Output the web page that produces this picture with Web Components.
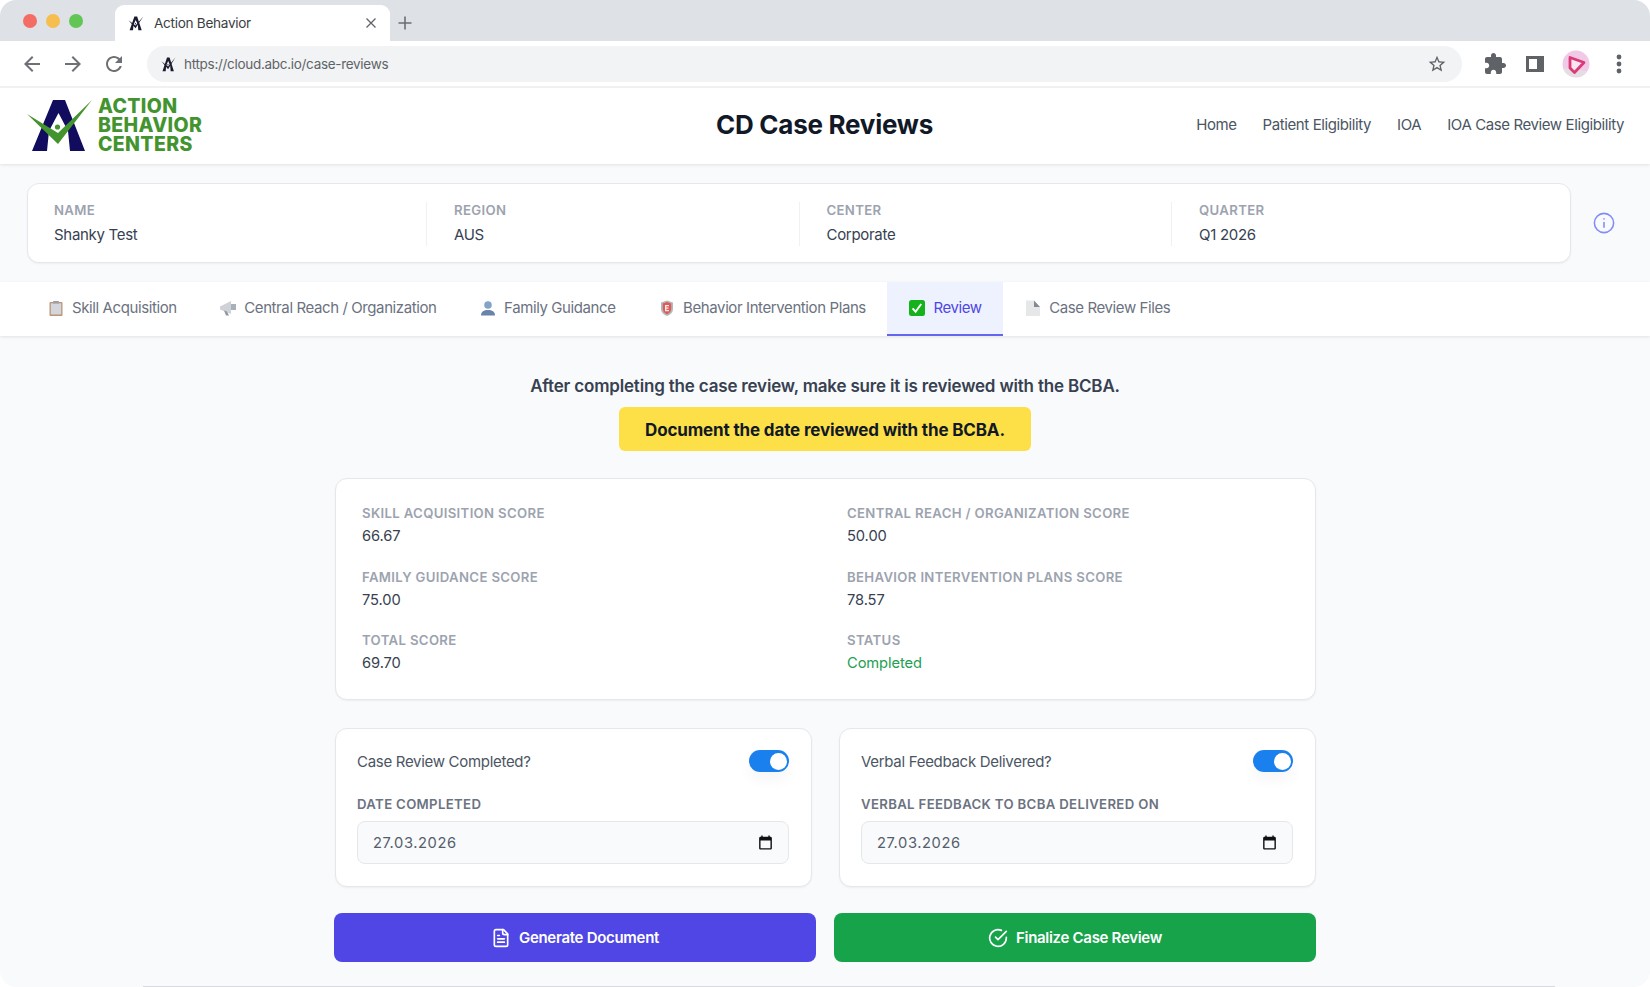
<!DOCTYPE html>
<html lang="en">
<head>
<meta charset="utf-8">
<title>CD Case Reviews</title>
<style>
  html, body { margin: 0; height: 987px; overflow: hidden; background: #fff; }
  body { font-family: Inter, "Liberation Sans", sans-serif; color: #374151; }
  .page { background: #f9fafb; height: 899px; overflow: hidden; border-radius: 0 0 16px 16px; }
  .page-edge { height: 1px; margin: 24px 95px 0 143px; background: #d8dadd; }
</style>
</head>
<body>
<browser-bar title-text="Action Behavior" url="https://cloud.abc.io/case-reviews"></browser-bar>
<div class="page">
  <app-header heading="CD Case Reviews">
    <a>Home</a><a>Patient Eligibility</a><a>IOA</a><a>IOA Case Review Eligibility</a>
  </app-header>
  <info-strip>
    <info-field label="Name">Shanky Test</info-field>
    <info-field label="Region">AUS</info-field>
    <info-field label="Center">Corporate</info-field>
    <info-field label="Quarter">Q1 2026</info-field>
  </info-strip>
  <tab-bar>
    <tab-item icon="clipboard">Skill Acquisition</tab-item>
    <tab-item icon="megaphone">Central Reach / Organization</tab-item>
    <tab-item icon="bust">Family Guidance</tab-item>
    <tab-item icon="shield">Behavior Intervention Plans</tab-item>
    <tab-item icon="check" active>Review</tab-item>
    <tab-item icon="page">Case Review Files</tab-item>
  </tab-bar>
  <review-panel>
    <review-notice slot="notice" note="After completing the case review, make sure it is reviewed with the BCBA.">Document the date reviewed with the BCBA.</review-notice>
    <score-card slot="scores">
      <score-item label="Skill Acquisition Score">66.67</score-item>
      <score-item label="Central Reach / Organization Score">50.00</score-item>
      <score-item label="Family Guidance Score">75.00</score-item>
      <score-item label="Behavior Intervention Plans Score">78.57</score-item>
      <score-item label="Total Score">69.70</score-item>
      <score-item label="Status" tone="good">Completed</score-item>
    </score-card>
    <toggle-card slot="toggles" question="Case Review Completed?" label="Date Completed" date="27.03.2026"></toggle-card>
    <toggle-card slot="toggles" question="Verbal Feedback Delivered?" label="Verbal Feedback to BCBA Delivered On" date="27.03.2026"></toggle-card>
    <action-button slot="actions" icon="doc" tone="indigo">Generate Document</action-button>
    <action-button slot="actions" icon="circle" tone="green">Finalize Case Review</action-button>
  </review-panel>
  <div class="page-edge"></div>
</div>

<script>
const html = String.raw;

const logoMark = (navy, green) => html`
  <polygon fill="${navy}" points="28,2 40,2 60,53 45,53 43,33 33.500,15 24,33 22,53 7,53"/>
  <polygon fill="${green}" points="2,16 33,35 67,2 33,46"/>
  <circle fill="${green}" cx="32.5" cy="29" r="2.6"/>`;

class BrowserBar extends HTMLElement {
  constructor() {
    super();
    const root = this.attachShadow({ mode: 'open' });
    root.innerHTML = html`
      <style>
        :host { display: block; font-family: Inter, "Liberation Sans", sans-serif; }
        svg { display: block; }
        .strip { height: 41px; background: #dee1e6; border-radius: 16px 16px 0 0; display: flex; align-items: flex-end; }
        .lights { display: flex; gap: 9px; padding: 0 0 13px 23px; width: 115px; box-sizing: border-box; }
        .lights i { width: 14px; height: 14px; border-radius: 50%; }
        .tab { width: 275px; height: 36px; background: #fff; border-radius: 9px 9px 0 0; display: flex; align-items: center; padding: 0 12px 0 13px; box-sizing: border-box; font-size: 13.6px; letter-spacing: -.3px; color: #3c4043; }
        .tab span { flex: 1; margin-left: 10px; }
        .plus { margin: 0 0 10px 7px; }
        .tools { height: 47px; box-sizing: border-box; padding-top: 5px; display: flex; align-items: flex-start; background: #fff; border-bottom: 2px solid #f1f1f2; }
        .nav { width: 147px; display: flex; gap: 17px; padding: 6px 0 0 20px; box-sizing: border-box; }
        .pill { width: 1315px; height: 36px; border-radius: 18px; background: #f1f3f4; display: flex; align-items: center; padding: 0 15px 0 14px; box-sizing: border-box; font-size: 13.5px; letter-spacing: -.3px; color: #5f6368; }
        .pill span { flex: 1; margin-left: 8px; }
        .right { display: flex; align-items: center; height: 36px; margin-left: 21px; }
      </style>
      <div class="strip">
        <div class="lights"><i style="background:#f46d64"></i><i style="background:#f6bd4f"></i><i style="background:#62c654"></i></div>
        <div class="tab">
          <svg width="16" height="15" viewBox="0 0 70 56" preserveAspectRatio="none">${logoMark('#1b1b2e', '#1b1b2e')}</svg>
          <span>${this.getAttribute('title-text')}</span>
          <svg width="14" height="14" viewBox="0 0 14 14"><path d="M2.5 2.5l9 9M11.5 2.5l-9 9" stroke="#5f6368" stroke-width="1.3" fill="none"/></svg>
        </div>
        <svg class="plus" width="16" height="16" viewBox="0 0 16 16"><path d="M8 1.5v13M1.5 8h13" stroke="#6b6f74" stroke-width="1.6" fill="none"/></svg>
      </div>
      <div class="tools">
        <div class="nav">
          <svg width="24" height="24" viewBox="0 0 24 24" fill="#6d7075"><path d="M20 11H7.83l5.59-5.59L12 4l-8 8 8 8 1.41-1.41L7.83 13H20v-2z"/></svg>
          <svg width="24" height="24" viewBox="0 0 24 24" fill="#6d7075"><path d="M4 11h12.17l-5.59-5.59L12 4l8 8-8 8-1.41-1.41L16.17 13H4v-2z"/></svg>
          <svg width="24" height="24" viewBox="0 0 24 24" fill="#6d7075"><path d="M17.65 6.35C16.2 4.9 14.21 4 12 4c-4.42 0-7.99 3.58-7.99 8s3.57 8 7.99 8c3.73 0 6.84-2.55 7.73-6h-2.08c-.82 2.33-3.04 4-5.65 4-3.31 0-6-2.69-6-6s2.69-6 6-6c1.66 0 3.14.69 4.22 1.78L13 11h7V4l-2.35 2.35z"/></svg>
        </div>
        <div class="pill">
          <svg width="15" height="15" viewBox="0 0 70 56" preserveAspectRatio="none">${logoMark('#1b1b2e', '#1b1b2e')}</svg>
          <span>${this.getAttribute('url')}</span>
          <svg width="20" height="20" viewBox="0 0 24 24" fill="#5f6368"><path d="M22 9.24l-7.19-.62L12 2 9.19 8.63 2 9.24l5.46 4.73L5.82 21 12 17.27 18.18 21l-1.63-7.03L22 9.24zM12 15.4l-3.76 2.27 1-4.28-3.32-2.88 4.38-.38L12 6.1l1.71 4.04 4.38.38-3.32 2.88 1 4.28L12 15.4z"/></svg>
        </div>
        <div class="right">
          <svg width="24" height="24" viewBox="0 0 24 24" fill="#5f6368"><path d="M20.5 11H19V7c0-1.1-.9-2-2-2h-4V3.5C13 2.12 11.88 1 10.5 1S8 2.12 8 3.5V5H4c-1.1 0-1.99.9-1.99 2v3.8H3.5c1.49 0 2.7 1.21 2.7 2.7s-1.21 2.7-2.7 2.7H2V20c0 1.1.9 2 2 2h3.8v-1.5c0-1.49 1.21-2.7 2.7-2.7 1.49 0 2.7 1.21 2.7 2.7V22H17c1.1 0 2-.9 2-2v-4h1.5c1.38 0 2.5-1.12 2.5-2.5S21.88 11 20.5 11z"/></svg>
          <svg style="margin-left:19px" width="18" height="18" viewBox="0 0 18 18"><path fill="#5f6368" fill-rule="evenodd" d="M0 1h18v16H0zM3 4v10h8V4z"/></svg>
          <svg style="margin-left:18px" width="28" height="28" viewBox="0 0 28 28"><circle cx="14" cy="14" r="13.5" fill="#f0c9e7"/><path d="M1 18a13.500 13.500 0 0 0 24 3z" fill="#e4dde2"/><path d="M8 7.500L22 12.500L12.500 22.500L8 18z" fill="#f8e6f1" stroke="#d93a78" stroke-width="2.800" stroke-linejoin="round"/></svg>
          <svg style="margin-left:26px" width="6" height="20" viewBox="0 0 6 20" fill="#5f6368"><circle cx="3" cy="3" r="2.4"/><circle cx="3" cy="10" r="2.4"/><circle cx="3" cy="17" r="2.4"/></svg>
        </div>
      </div>`;
  }
}

class AppHeader extends HTMLElement {
  constructor() {
    super();
    const root = this.attachShadow({ mode: 'open' });
    root.innerHTML = html`
      <style>
        :host { display: grid; grid-template-columns: 1fr auto 1fr; height: 76px; background: #fff; align-items: center; padding: 0 26px 0 25px; box-sizing: border-box; box-shadow: 0 1px 3px rgba(0,0,0,.1); position: relative; }
        .brand { display: flex; align-items: center; height: 56px; }
        .words { margin: -2px 0 0 3px; font-weight: 800; font-size: 19.500px; line-height: 19px; letter-spacing: .35px; color: #43942f; }
        h1 { margin: 0 0 2px; font-size: 26px; line-height: 36px; letter-spacing: -.26px; font-weight: 700; color: #111827; }
        nav { display: flex; justify-content: flex-end; gap: 26px; margin-bottom: 3px; }
        ::slotted(a) { font-size: 15px; letter-spacing: -.4px; color: #4b5563; }
      </style>
      <div class="brand">
        <svg width="70" height="56" viewBox="0 0 70 56">${logoMark('#110c5e', '#43942f')}</svg>
        <div class="words">ACTION<br>BEHAVIOR<br>CENTERS</div>
      </div>
      <h1>${this.getAttribute('heading')}</h1>
      <nav><slot></slot></nav>`;
  }
}

class InfoStrip extends HTMLElement {
  constructor() {
    super();
    const root = this.attachShadow({ mode: 'open' });
    root.innerHTML = html`
      <style>
        :host { display: flex; align-items: center; gap: 22px; padding: 19px 35px 19px 27px; }
        .card { flex: 1; display: grid; grid-template-columns: 400px 372.500px 372.500px 1fr; height: 80px; box-sizing: border-box; padding: 18px 0 0 26px; background: #fff; border: 1px solid #e5e7eb; border-radius: 12px; box-shadow: 0 1px 2px rgba(0,0,0,.05); }
        svg { display: block; }
      </style>
      <div class="card"><slot></slot></div>
      <svg width="22" height="22" viewBox="0 0 24 24" fill="none" stroke="#818cf8" stroke-width="1.700" stroke-linecap="round"><circle cx="12" cy="12" r="10.500"/><path d="M12 16.500v-5M12 7.500h.01"/></svg>`;
  }
}

class InfoField extends HTMLElement {
  constructor() {
    super();
    const root = this.attachShadow({ mode: 'open' });
    root.innerHTML = html`
      <style>
        :host { display: block; height: 44px; border-right: 1px solid #f0f1f3; margin-right: 27px; }
        :host(:last-child) { border-right: 0; }
        .label { font-size: 13.200px; line-height: 17px; font-weight: 600; letter-spacing: .025em; color: #9ca3af; text-transform: uppercase; }
        .value { font-size: 15px; line-height: 24px; letter-spacing: -.3px; margin-top: 4px; color: #374151; }
      </style>
      <div class="label">${this.getAttribute('label')}</div>
      <div class="value"><slot></slot></div>`;
  }
}

class TabBar extends HTMLElement {
  constructor() {
    super();
    const root = this.attachShadow({ mode: 'open' });
    root.innerHTML = html`
      <style>
        :host { display: flex; height: 54px; padding-left: 26px; background: #fff; box-shadow: 0 1px 3px rgba(0,0,0,.1); position: relative; }
      </style>
      <slot></slot>`;
  }
}

const tabIcons = {
  clipboard: '<rect x="1.500" y="2" width="13" height="14" rx="1" fill="#b5815c"/><rect x="2.800" y="3.300" width="10.400" height="11.200" fill="#ccd0d6"/><rect x="5" y="1" width="6" height="2.600" rx=".6" fill="#8d8f94"/>',
  megaphone: '<path d="M0 6.500L11 1v13L0 9.500z" fill="#c7ccd2"/><rect x="11" y="4" width="5" height="6" fill="#9aa3ad"/><path d="M4 10.500l2 5h3l-2-4z" fill="#7e8791"/>',
  bust: '<circle cx="8" cy="5" r="3.800" fill="#6f93bd"/><path d="M1 15.500c0-4 3-5.600 7-5.600s7 1.600 7 5.600z" fill="#4f6f9c"/>',
  shield: '<path d="M8 .5l6 2v6.500c0 3.500-3 6-6 7-3-1-6-3.500-6-7V2.500z" fill="#a8adb3"/><path d="M8 2l4.200 1.500v5.500c0 2.500-2.200 4.500-4.200 5.300-2-.8-4.200-2.800-4.200-5.300V3.500z" fill="#d9403a"/><path d="M6 5h4v1.200H7.400v1.300H9.500v1.200H7.400V10H10v1.200H6z" fill="#f7e7e5"/>',
  check: '<rect x="0" y="0" width="16" height="16" rx="2.500" fill="#16b21c"/><path d="M3.600 8.300l3 3.400 5.600-7.700" fill="none" stroke="#fff" stroke-width="1.900"/>',
  page: '<path d="M1 .5h8l6 6.500v9H1z" fill="#e1e3e6"/><path d="M9 .5l6 6.500H9z" fill="#70757c"/>'
};

class TabItem extends HTMLElement {
  constructor() {
    super();
    const root = this.attachShadow({ mode: 'open' });
    root.innerHTML = html`
      <style>
        :host { display: flex; align-items: center; gap: 8px; height: 54px; box-sizing: border-box; padding: 0 21.500px 1px 22px; font-size: 15px; letter-spacing: -.4px; color: #6b7280; border-bottom: 2px solid transparent; }
        :host([active]) { background: #eef2ff; color: #4f46e5; border-bottom-color: #6366f1; }
        svg { display: block; flex: none; opacity: .85; }
        :host([active]) svg { opacity: 1; }
      </style>
      <svg width="16" height="16" viewBox="0 0 16 16">${tabIcons[this.getAttribute('icon')]}</svg>
      <slot></slot>`;
  }
}

class ReviewPanel extends HTMLElement {
  constructor() {
    super();
    const root = this.attachShadow({ mode: 'open' });
    root.innerHTML = html`
      <style>
        :host { display: block; width: 981px; margin-left: 335px; padding-top: 37px; }
        .scores { margin-top: 27px; }
        .toggles { display: grid; grid-template-columns: 477px 477px; column-gap: 27px; margin-top: 28px; }
        .actions { display: grid; grid-template-columns: 482px 482px; column-gap: 18px; margin: 26px 0 0 -1px; }
      </style>
      <slot name="notice"></slot>
      <div class="scores"><slot name="scores"></slot></div>
      <div class="toggles"><slot name="toggles"></slot></div>
      <div class="actions"><slot name="actions"></slot></div>`;
  }
}

class ReviewNotice extends HTMLElement {
  constructor() {
    super();
    const root = this.attachShadow({ mode: 'open' });
    root.innerHTML = html`
      <style>
        :host { display: flex; flex-direction: column; align-items: center; margin-left: -1px; }
        p { margin: 0; font-size: 17px; line-height: 26px; letter-spacing: -.18px; font-weight: 600; color: #374151; }
        .badge { margin-top: 8px; width: 412px; height: 44px; box-sizing: border-box; padding-top: 1px; display: flex; align-items: center; justify-content: center; border-radius: 6px; background: #fde047; color: #111827; font-size: 17px; letter-spacing: -.15px; font-weight: 700; }
      </style>
      <p>${this.getAttribute('note')}</p>
      <div class="badge"><slot></slot></div>`;
  }
}

class ScoreCard extends HTMLElement {
  constructor() {
    super();
    const root = this.attachShadow({ mode: 'open' });
    root.innerHTML = html`
      <style>
        :host { display: grid; grid-template-columns: 485px 1fr; grid-auto-rows: 63.500px; height: 222px; box-sizing: border-box; padding: 25px 26px 0; background: #fff; border: 1px solid #e5e7eb; border-radius: 12px; box-shadow: 0 1px 2px rgba(0,0,0,.05); }
      </style>
      <slot></slot>`;
  }
}

class ScoreItem extends HTMLElement {
  constructor() {
    super();
    const root = this.attachShadow({ mode: 'open' });
    root.innerHTML = html`
      <style>
        :host { display: block; }
        .label { font-size: 13.200px; line-height: 18px; font-weight: 600; letter-spacing: .025em; color: #9ca3af; text-transform: uppercase; }
        .value { font-size: 14.700px; line-height: 22px; letter-spacing: -.1px; margin-top: 3px; color: #374151; }
        :host([tone=good]) .value { color: #22a052; }
      </style>
      <div class="label">${this.getAttribute('label')}</div>
      <div class="value"><slot></slot></div>`;
  }
}

class ToggleCard extends HTMLElement {
  constructor() {
    super();
    const root = this.attachShadow({ mode: 'open' });
    root.innerHTML = html`
      <style>
        :host { display: block; height: 159px; box-sizing: border-box; padding: 21px 22px 0 21px; background: #fff; border: 1px solid #e5e7eb; border-radius: 12px; box-shadow: 0 1px 2px rgba(0,0,0,.05); }
        .row { display: flex; align-items: center; justify-content: space-between; height: 22px; font-size: 15px; letter-spacing: -.3px; color: #4b5563; }
        .switch { width: 40px; height: 22px; box-sizing: border-box; padding: 2.500px 2px; display: flex; justify-content: flex-end; border-radius: 11px; background: #1a80ee; box-shadow: 0 8px 14px rgba(0,0,0,.04); }
        .switch i { width: 17px; height: 17px; border-radius: 50%; background: #fff; }
        label { display: block; margin-top: 23px; font-size: 13.200px; line-height: 18px; font-weight: 600; letter-spacing: .025em; text-transform: uppercase; color: #6b7280; }
        .date { margin-top: 8px; height: 43px; box-sizing: border-box; padding: 0 14px 0 15px; display: flex; align-items: center; justify-content: space-between; background: #f9fafb; border: 1px solid #e5e7eb; border-radius: 8px; font-size: 14.700px; letter-spacing: .04em; color: #555e6c; }
        svg { display: block; }
      </style>
      <div class="row"><span>${this.getAttribute('question')}</span><div class="switch"><i></i></div></div>
      <label>${this.getAttribute('label')}</label>
      <div class="date"><span>${this.getAttribute('date')}</span>
        <svg width="17" height="17" viewBox="0 0 24 24" fill="#111"><path d="M19 4h-1V2h-2v2H8V2H6v2H5c-1.100 0-2 .9-2 2v14c0 1.100.9 2 2 2h14c1.100 0 2-.9 2-2V6c0-1.100-.9-2-2-2zm0 16H5V9h14v11z"/></svg>
      </div>`;
  }
}

const buttonIcons = {
  doc: '<path d="M15 2H6a2 2 0 0 0-2 2v16a2 2 0 0 0 2 2h12a2 2 0 0 0 2-2V7Z"/><path d="M14 2v4a2 2 0 0 0 2 2h4"/><path d="M10 9H8M16 13H8M16 17H8"/>',
  circle: '<path d="M22 11.080V12a10 10 0 1 1-5.930-9.140"/><path d="m9 11 3 3L22 4"/>'
};

class ActionButton extends HTMLElement {
  constructor() {
    super();
    const root = this.attachShadow({ mode: 'open' });
    root.innerHTML = html`
      <style>
        :host { display: flex; align-items: center; justify-content: center; gap: 8px; height: 49px; border-radius: 8px; color: #fff; font-size: 15px; letter-spacing: -.3px; font-weight: 600; }
        :host([tone=indigo]) { background: #4f46e5; }
        :host([tone=green]) { background: #16a34a; }
        svg { display: block; }
      </style>
      <svg width="20" height="20" viewBox="0 0 24 24" fill="none" stroke="#fff" stroke-width="2" stroke-linecap="round" stroke-linejoin="round">${buttonIcons[this.getAttribute('icon')]}</svg>
      <slot></slot>`;
  }
}

customElements.define('browser-bar', BrowserBar);
customElements.define('app-header', AppHeader);
customElements.define('info-strip', InfoStrip);
customElements.define('info-field', InfoField);
customElements.define('tab-bar', TabBar);
customElements.define('tab-item', TabItem);
customElements.define('review-panel', ReviewPanel);
customElements.define('review-notice', ReviewNotice);
customElements.define('score-card', ScoreCard);
customElements.define('score-item', ScoreItem);
customElements.define('toggle-card', ToggleCard);
customElements.define('action-button', ActionButton);
</script>
</body>
</html>
